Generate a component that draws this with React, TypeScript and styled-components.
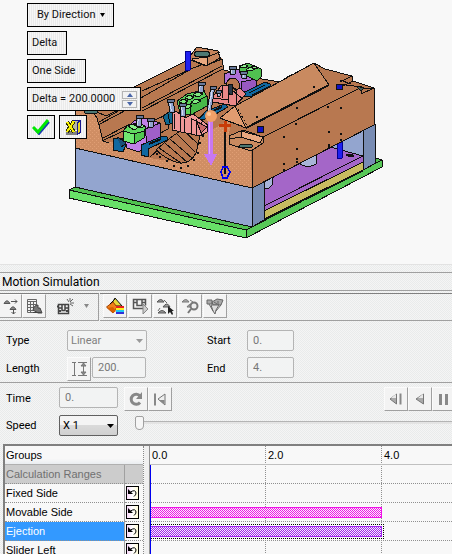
import React from "react";
import styled, { createGlobalStyle, css } from "styled-components";

const GlobalStyle = createGlobalStyle`
  * { box-sizing: border-box; }
  html, body { margin: 0; }
  body { background: #f8f8f8; color: #000; font-family: Roboto, "Open Sans", sans-serif; font-size: 11px; line-height: 16px; }
  button, input, select { font: inherit; color: inherit; margin: 0; }
  svg { display: block; flex: none; }
`;

const grain = "repeating-conic-gradient(#e9ebeb 0 25%, #f5f5f5 0 50%) 0 0 / 2px 2px";

const Page = styled.div`
  height: 100vh;
  display: flex;
  flex-direction: column;
  overflow: hidden;
`;

const Viewport = styled.section`
  position: relative;
  flex: none;
  background: #f8f8f8;
  border-bottom: 1px solid #e2e2e2;
  overflow: hidden;
`;

const FlagMenu = styled.div`
  position: absolute;
  top: 3px;
  left: 27px;
  display: flex;
  flex-direction: column;
  align-items: flex-start;
  gap: 4px;
`;

const FlagRow = styled.div`
  display: flex;
  gap: 4px;
`;

const flagBox = css`
  height: 24px;
  display: flex;
  align-items: center;
  border: 1px solid #000;
  background: repeating-linear-gradient(90deg, #f6f6f6 0 1px, #eaeaea 1px 2px);
  color: #111;
  padding: 0 4px;
  white-space: nowrap;
`;

const FlagButton = styled.button<{ $w: number; $menu?: boolean }>`
  ${flagBox}
  width: ${(p) => p.$w}px;
  ${(p) => p.$menu && "padding: 0 8px 0 9px; justify-content: space-between;"}
`;

const FlagIconButton = styled.button`
  ${flagBox}
  width: 28px;
  justify-content: center;
  padding: 0;
`;

const FlagField = styled.div`
  ${flagBox}
  width: 114px;
  gap: 3px;
  padding-right: 3px;
`;

const FlagInput = styled.input`
  flex: 1;
  min-width: 0;
  border: 0;
  padding: 0;
  background: transparent;
`;

const Spinner = styled.span`
  display: flex;
  flex-direction: column;
  gap: 1px;
`;

const SpinButton = styled.button`
  width: 15px;
  height: 8px;
  padding: 0;
  display: grid;
  place-items: center;
  border: 1px solid #b4b4b4;
  background: #f2f2f2;
`;

const Dock = styled.section`
  flex: 1;
  min-height: 0;
  display: flex;
  flex-direction: column;
  background: ${grain};
  padding-top: 7px;
`;

const DockTitle = styled.h1`
  margin: 0;
  height: 19px;
  flex: none;
  padding-left: 2px;
  border-top: 1px solid #a0a0a0;
  border-bottom: 1px solid #a0a0a0;
  font-size: 12px;
  font-weight: 400;
  line-height: 18px;
`;

const Toolbars = styled.div`
  display: flex;
  flex: none;
  gap: 1px;
  margin-top: 2px;
`;

const Toolbar = styled.div<{ $fill?: boolean }>`
  display: flex;
  gap: 1px;
  height: 28px;
  border-top: 1px solid #808080;
  border-bottom: 1px solid #a0a0a0;
  ${(p) => (p.$fill ? "flex: 1; padding-left: 3px;" : "width: 99px; border-right: 1px solid #a0a0a0;")}
`;

const ToolButton = styled.button<{ $flat?: boolean; $wide?: boolean }>`
  width: ${(p) => (p.$wide ? 52 : 24)}px;
  height: 24px;
  flex: none;
  padding: 0;
  display: flex;
  align-items: center;
  justify-content: center;
  gap: 10px;
  background: ${(p) => (p.$flat ? "transparent" : "#f3f3f3")};
  border: 1px solid ${(p) => (p.$flat ? "transparent" : "#fbfbfb")};
  border-right-color: ${(p) => (p.$flat ? "transparent" : "#a0a0a0")};
  border-bottom-color: ${(p) => (p.$flat ? "transparent" : "#a0a0a0")};
`;

const FirstToolGroup = styled.div`
  display: flex;
  margin-left: -2px;
`;

const MotionForm = styled.form`
  display: grid;
  flex: none;
  grid-template-columns: 61px 140px 40px 1fr;
  grid-template-rows: 21px 24px;
  align-items: center;
  row-gap: 6px;
  padding: 9px 6px 1px;
  border-bottom: 1px solid #a0a0a0;
`;

const PlayForm = styled.form`
  display: grid;
  flex: none;
  grid-template-columns: 53px 65px 1fr;
  grid-template-rows: 24px 21px;
  align-items: center;
  row-gap: 4px;
  padding: 4px 0 8px 6px;
`;

const Inline = styled.div`
  display: flex;
  align-items: flex-start;
  gap: 1px;
`;

const TextBox = styled.input<{ $w: number }>`
  width: ${(p) => p.$w}px;
  height: 21px;
  padding: 0 5px;
  border: 1px solid #b4b4b4;
  border-radius: 2px;
  background: #f2f3f3;
  color: #777;
  align-self: start;
`;

const SelectWrap = styled.span<{ $w: number; $off?: boolean }>`
  display: grid;
  width: ${(p) => p.$w}px;
  align-items: center;
  color: ${(p) => (p.$off ? "#808080" : "#000")};
  > * { grid-area: 1 / 1; }
  > svg { justify-self: end; margin-right: 4px; pointer-events: none; }
  > select {
    width: 100%;
    height: 21px;
    appearance: none;
    padding: 0 3px;
    opacity: 1;
    border: 1px solid ${(p) => (p.$off ? "#b4b4b4" : "#606060")};
    border-radius: 2px;
    background: ${(p) => (p.$off ? "#f2f3f3" : "linear-gradient(#f4f4f4 50%, #dadada 50%, #d0d0d0)")};
  }
`;

const Transport = styled.div`
  display: flex;
  justify-content: space-between;
  min-width: 0;
`;

const ButtonSet = styled.div<{ $bleed?: boolean }>`
  display: flex;
  ${(p) => p.$bleed && "margin-right: -4px;"}
`;

const Slider = styled.input`
  appearance: none;
  width: 100%;
  height: 16px;
  margin: 0;
  background: linear-gradient(#b4b4b4, #b4b4b4) 0 6px / 100% 1px no-repeat,
    linear-gradient(#e4e4e4, #e4e4e4) 0 7px / 100% 2px no-repeat;
  &::-webkit-slider-thumb {
    appearance: none;
    width: 9px;
    height: 14px;
    border: 1px solid #a0a0a0;
    border-radius: 2px 2px 4px 4px;
    background: #f6f6f6;
  }
`;

const SliderCell = styled.div`
  padding-left: 11px;
`;

const Schedule = styled.section`
  flex: 1;
  min-height: 0;
  overflow: hidden;
  display: flex;
  margin-left: 3px;
  border-top: 2px solid #808080;
  border-left: 2px solid #808080;
  background: #f8f8f8;
  font-family: "Liberation Sans", Arial, sans-serif;
  font-size: 11px;
  line-height: 12px;
`;

const GroupTable = styled.table`
  flex: none;
  width: 139px;
  height: max-content;
  table-layout: fixed;
  border-collapse: separate;
  border-spacing: 0;
  border-right: 1px dotted #888;
`;

const HeadCell = styled.th<{ $w?: number }>`
  height: 19px;
  ${(p) => p.$w && `width: ${p.$w}px;`}
  padding: 0 1px;
  text-align: left;
  font-weight: 400;
  border-bottom: 1px solid #b0b0b0;
  background: linear-gradient(#f8f8f8 70%, #eaedf0);
`;

const GroupRow = styled.tr<{ $kind?: "muted" | "selected" }>`
  > td {
    height: 19px;
    padding: 0 1px;
    white-space: nowrap;
    border-bottom: 1px dotted #909090;
    ${(p) => p.$kind === "muted" && "background: #cccccc; color: #707070;"}
  }
  > td:first-child {
    border-right: 1px solid #a0a0a0;
    ${(p) => p.$kind === "selected" && "background: #3399ff; color: #fff;"}
  }
`;

const ResetButton = styled.button`
  display: grid;
  place-items: center;
  width: 13px;
  height: 14px;
  padding: 0;
  border: 1px solid #000;
  background: linear-gradient(90deg, #f8d8f8, #fff 50%, #fffbd8);
`;

const Splitter = styled.div`
  width: 6px;
  flex: none;
  background: #f0f0f0;
  border-right: 1px solid #909090;
`;

const Timeline = styled.div`
  flex: 1;
  min-width: 0;
  background: repeating-linear-gradient(#909090 0 1px, transparent 1px 2px) 115px 0 / 1px 100% no-repeat,
    repeating-linear-gradient(#909090 0 1px, transparent 1px 2px) 231px 0 / 1px 100% no-repeat;
`;

const Scale = styled.div`
  display: grid;
  grid-template-columns: 116px 116px 1fr;
  height: 19px;
  align-items: center;
  border-bottom: 1px solid #c0c0c0;
  > span { padding-left: 2px; }
`;

const Tracks = styled.div`
  border-left: 1px solid #0000f0;
`;

const Track = styled.div`
  height: 19px;
  display: flex;
  align-items: center;
  border-bottom: 1px dotted #909090;
`;

const Bar = styled.div<{ $color: string }>`
  width: 231px;
  height: 11px;
  border: 1px solid ${(p) => p.$color};
  border-left: 0;
  background: repeating-conic-gradient(${(p) => p.$color} 0 25%, #f8f8f8 0 50%) 0 0 / 2px 2px;
`;

const SelectedSpan = styled.div`
  padding: 1px 1px 1px 0;
  border: 1px dotted #000;
  border-left: 0;
`;

const K = "#101010";

function Caret({ color = "#000", wide = 7 }: { color?: string; wide?: number }) {
  return (
    <svg width={wide} height="4" viewBox="0 0 7 4" preserveAspectRatio="none" aria-hidden="true">
      <path d="M0 0h7L3.5 4z" fill={color} />
    </svg>
  );
}

function SpinGlyph({ down }: { down?: boolean }) {
  return (
    <svg width="6" height="4" viewBox="0 0 6 4" aria-hidden="true">
      <path d={down ? "M0 0h6L3 4z" : "M0 4h6L3 0z"} fill="#4a66a8" />
    </svg>
  );
}

const icons: Record<string, React.ReactNode> = {
  axes: (
    <g fill="#888" stroke="#555">
      <path d="M3 6.5h6Q6 1 3 6.5zM9 12.5h6Q12 7 9 12.5z" />
      <path d="M10 4.5h6M14 2.5l2 2-2 2M12.5 13v4M10.5 15l2 2 2-2" fill="none" />
    </g>
  ),
  table: (
    <g fill="none" stroke="#666">
      <path d="M2.500 2.500h9v13h-9zM2 4.500h10M2 7.500h10M2 10.500h7M2 13.500h7M5.500 4v11M8.500 4v8" />
      <path d="M8 13q1-5 5-5v3h2l2 5h-4z" fill="#777" stroke="#444" />
      <path d="M8 15.500h8" stroke="#444" />
    </g>
  ),
  create: (
    <g fill="none" stroke="#444">
      <path d="M2.500 7.500h10v9h-10zM3 11h3V8M12 11H9V8M6 11.500v2h3v-2" strokeWidth="1.500" />
      <path d="M1 9.500h2M2 14h3M10 14h3" strokeWidth="2" />
      <path d="M14 1v3M17 2l-3 3M18 6h-4M11 2l2 3M17 9l-3-2" stroke="#666" />
    </g>
  ),
  colors: (
    <g>
      <path d="M9 1L16 9h-6L6 6z" fill="#e8d838" stroke="#111" />
      <path d="M0.500 10L7 5l4 5-4 6z" fill="#f08018" stroke="#a04000" />
      <path d="M1 11l6-1 3 4-3 2z" fill="#d86000" />
      <path d="M9 2L4 7" stroke="#111" />
      <path d="M10 9h8v2h-8z" fill="#e82020" />
      <path d="M10 11h8v2h-8z" fill="#f8f020" />
      <path d="M10 13h8v2h-8z" fill="#20c8f0" />
      <path d="M10 15h8v2h-8z" fill="#3030d8" />
    </g>
  ),
  run: (
    <g fill="none" stroke="#555">
      <path d="M12 11.500H2.500v-9h12v6M3 5.500h3v3h5v-3h3M6 3v3M11 3v3" strokeWidth="1.500" />
      <path d="M12 7l5 5-5 5z" fill="#ccc" stroke="#888" />
    </g>
  ),
  pick: (
    <g>
      <path d="M1 5h7Q5 0 1 5zM7 10h7Q11 4 7 10zM2 16h8Q6 11 2 16z" fill="#999" stroke="#555" />
      <path d="M8 3l3 3M4 11l-2 3" stroke="#666" />
      <path d="M12 9v8l2-2 2 3 1-1-1-3h2z" fill="#222" />
    </g>
  ),
  inspect: (
    <g fill="#aaa" stroke="#777">
      <path d="M1 5h7Q5 0 1 5zM6 10h6Q9 5 6 10z" />
      <path d="M9 3l3 2" />
      <circle cx="13" cy="9" r="3.500" fill="#eee" strokeWidth="2" />
      <path d="M10 12l-3 4" strokeWidth="2" />
    </g>
  ),
  camera: (
    <g fill="#aaa" stroke="#666">
      <path d="M1 3h5v4H1zM6 5l5-3 6 1-2 5H7z" />
      <path d="M5 8h8l-3 5-1 4-2-3z" fill="#ddd" />
      <path d="M3 7l4 7M12 4v4M8 5l3 2M15 8l-5 6" />
    </g>
  ),
  span: (
    <g fill="none" stroke="#777">
      <path d="M2 2.500h4M4.500 2v14M2 15.500h4M8 2.500h9M8 15.500h9M13.500 3v12" />
      <path d="M11 6l2.500-3L16 6zM11 12l2.500 3 2.500-3z" fill="#888" />
    </g>
  ),
  reload: (
    <g fill="none" stroke="#888">
      <path d="M13 12.500A5 5 0 1 1 13 6" strokeWidth="3" />
      <path d="M15 2v7H9z" fill="#888" stroke="none" />
    </g>
  ),
  first: (
    <g>
      <path d="M4 3.500v12" stroke="#888" strokeWidth="2" />
      <path d="M14 4v11L7 9z" fill="#eee" stroke="#777" />
      <path d="M13.500 10v4.500L8 10z" fill="#888" />
    </g>
  ),
  stepBack: (
    <g>
      <path d="M9.500 4v10L3 9z" fill="#aaa" stroke="#777" />
      <path d="M4 8l5-4v4z" fill="#e8e8e8" />
      <path d="M13.500 3.500v11" stroke="#888" strokeWidth="2" />
    </g>
  ),
  back: (
    <g>
      <path d="M12.500 4v10L5 9z" fill="#aaa" stroke="#777" />
      <path d="M7 8l5-4v4z" fill="#e8e8e8" />
    </g>
  ),
  pause: <path d="M4 4h3v11H4zM10 4h3v11h-3z" fill="#888" />,
};

function Icon({ name }: { name: string }) {
  return (
    <svg width="18" height="18" viewBox="0 0 18 18" aria-hidden="true">
      {icons[name]}
    </svg>
  );
}

function Tool({ icon, label }: { icon: string; label: string }) {
  return (
    <ToolButton type="button" aria-label={label}>
      <Icon name={icon} />
    </ToolButton>
  );
}

function Pin({ x, y, w, h, lean = 0 }: { x: number; y: number; w: number; h: number; lean?: number }) {
  return (
    <g stroke={K}>
      <path d={`M${x} ${y}h${w}l${lean} ${h}h${-w}z`} fill="#93a5cf" />
      <path d={`M${x + 1.5} ${y + 2}l${lean} ${h - 3}`} stroke="#d4dcf0" />
      <path d={`M${x - 1} ${y}h${w + 2}v3h${-w - 2}z`} fill="#66789a" />
    </g>
  );
}

const boreDots = [
  [297, 107], [314, 86], [328, 106], [341, 107], [296, 123], [284, 136], [341, 133], [341, 139],
  [257, 116], [329, 131], [329, 144], [329, 146], [297, 148], [297, 158], [297, 161], [284, 163], [284, 169],
  [157, 153], [160, 156], [167, 160], [174, 165], [181, 167], [188, 165], [194, 159], [198, 152], [200, 142], [203, 135],
];

function MoldDrawing() {
  return (
    <svg width="452" height="264" viewBox="0 0 452 264" shapeRendering="crispEdges" role="img" aria-label="Mold assembly">
      <defs>
        <pattern id="lit" width="4" height="4" patternUnits="userSpaceOnUse">
          <path d="M0 0h4v4H0z" fill="#d08e64" />
          <path d="M0 0h1v1H0zM2 2h1v1H2z" fill="#e09e74" />
        </pattern>
      </defs>
      <g stroke={K} strokeWidth="1" strokeLinejoin="round">
        {/* base plate */}
        <path d="M69 190L75 187 252 227 376 158 382 160 246 230z" fill="#50c050" />
        <path d="M69 190L246 230V238L69 198z" fill="#68e068" />
        <path d="M246 230L382 160V167L246 238z" fill="#58c858" />
        {/* spacer blocks */}
        <path d="M75 148L252 188V227L75 187z" fill="#93a5cf" />
        <path d="M330 147L363 128V157z" fill="#93a5cf" />
        <path d="M363 129L375 123 376 163 363 170z" fill="#788cb4" />
        {/* ejector plates */}
        <path d="M264 182L330 147 363 156V162L264 211z" fill="#a466c8" />
        <path d="M264 211L363 162V170L264 219z" fill="#c8bc60" />
        <path d="M264 206L363 156M264 220L363 171" fill="none" />
        <path d="M252 188L264 182V220L252 227z" fill="#788cb4" />
        <path d="M300 155V164Q308 169 316 164V150z" fill="#a8b4d8" />
        <path d="M264 178V188H269L272 185V175z" fill="#a8b4d8" />
        <path d="M337 142H342V158H337z" fill="#2020f0" stroke="#000090" />
        <path d="M346 155l5-1 3 2-4 1z" fill={K} />
        {/* cavity plate */}
        <path d="M75 148V108L96 108 138 85 186 61 197 47 218 51 224 70 256 78 280 82 314 63 325 69 352 76 353 81 374 88V125L252 188z" fill="#b87850" />
        <path d="M75 109L97 111 102 141 120 143 150 158 181 163 198 150 200 136 230 120 229 143 251 151 252 188 75 148z" fill="url(#lit)" stroke="none" />
        <path d="M75 109V148L252 188V151L229 143M263 137L358 89 374 88M374 88V125L252 188" fill="none" />
        {/* left ridge */}
        <path d="M96 112L138 88 186 62 222 58 224 72 148 112 125 132 103 142z" fill="#b87850" stroke="none" />
        <path d="M138 85L186 61M99 122L193 68 221 58M98 125L130 108M142 111L223 69M142 108L222 66M142 91L193 68" fill="none" />
        <path d="M92 110L97 118 99 125 103 141 109 143M102 141L140 123M103 138L128 125M97 112L106 116 130 104" fill="none" />
        <path d="M186 61L197 47 218 51 220 58 206 66 191 60z" fill="#c4845c" />
        <path d="M192 59L207 57V66L192 60z" fill="#e8a880" />
        <path d="M207 57L220 52M191 60L205 66 222 59M222 59L224 70" fill="none" />
        <ellipse cx="202" cy="54" rx="8" ry="3" fill="#4c7874" />
        <ellipse cx="91" cy="112" rx="7" ry="2" fill="#4c7874" />
        <path d="M185 51H190V70H185z" fill="#2020f0" stroke="#000090" />
        {/* right ramp */}
        <path d="M280 82L289 76 296 73 298 76 284 84z" fill={K} />
        <path d="M235 106L314 63 329 85 246 128z" fill="#c98a60" />
        <path d="M220 118L235 106 246 128z" fill="#e09c70" />
        <path d="M246 128L329 85" strokeWidth="2" />
        <path d="M222 119L245 127M238 109L247 126" strokeDasharray="2 2" />
        <path d="M340 82L352 76 353 81 341 87M338 84L362 87 361 94 374 88M340 80L351 84" fill="none" />
        <path d="M356 86L364 88 361 91z" fill="#405c58" />
        {/* front pocket */}
        <path d="M229 136L243 130 263 137V143L251 151 229 144z" fill="#c98a60" />
        <path d="M241 131L263 137 260 143 241 137z" fill="#e8a880" />
        <path d="M229 139L241 137V131M241 137L260 143" fill="none" />
        <ellipse cx="246" cy="146" rx="7" ry="2" fill="#4c7874" />
        {/* core well */}
        <path d="M156 150L170 138 190 124 205 126 200 136 196 153Q190 164 180 163 168 161 156 150z" fill="#b87850" />
        <path d="M159 148L181 163M165 143L187 162M170 139L192 158M177 134L195 152M183 130L198 144M143 151L158 141M120 142L142 149M150 157L158 150" fill="none" />
        <path d="M147 123L164 116Q170 118 168 129L155 136z" fill="#b87850" />
        {/* left slider */}
        <path d="M113 139L121 138 127 142 123 152 113 150z" fill="#1068a0" />
        <path d="M117 137L127 143 121 147" fill="#185078" />
        <path d="M123 132L134 121 145 118 160 123V138L147 143 139 152 127 148z" fill="#c080e8" />
        <path d="M145 129L160 123V138L147 143z" fill="#a060c8" />
        <path d="M141 145L163 136 167 137V140L148 149 148 157 141 155z" fill="#1068a0" />
        <path d="M149 144L161 139" strokeWidth="2" />
        <path d="M123 131L134 134V144L123 141z" fill="#70e870" />
        <path d="M134 134L144 129V138L134 144z" fill="#50c850" />
        <path d="M123 131L128 125 139 123 146 127 144 131 134 134z" fill="#60d860" />
        <path d="M128 126L132 124 139 127 134 130zM134 124L140 123 145 126 141 128z" fill="#88f088" />
        <Pin x={137} y={115} w={5} h={11} lean={-1} />
        <Pin x={148} y={118} w={5} h={9} />
        {/* rear slider */}
        <path d="M224 74L238 69 256 79V88L241 93 224 83z" fill="#b070d8" />
        <path d="M241 82L256 79V88L241 93z" fill="#9858c0" />
        <path d="M226 85Q228 76 236 79 242 84 239 90z" fill="#b87850" />
        <path d="M239 66L248 63 261 69V77L257 81 251 78 239 72z" fill="#50c050" />
        <path d="M240 67l4-3 4 2-3 2zM246 70l4-3 5 2-4 2zM251 66l4 0 3 2-4 1z" fill="#90f090" />
        <path d="M243 93L265 82 270 84V86L252 96 245 97z" fill="#1068a0" />
        <path d="M249 93L265 85M252 95L268 87" />
        <Pin x={230} y={66} w={5} h={8} />
        <Pin x={241} y={71} w={5} h={7} lean={1} />
        {/* central inserts */}
        <path d="M212 98L221 86 228 85V95L240 88 246 94 235 106 213 102z" fill="#e88888" />
        <path d="M228 95V103M234 92L242 98M222 86V98M236 91L236 104M213 98L229 100" fill="none" />
        <path d="M229 84L228 93 232 95 232 84z" fill="#283848" />
        <path d="M163 116L172 110 181 114 177 122 166 125z" fill="#106890" />
        <path d="M168 114L170 123M172 112L174 122" />
        <path d="M206 111L225 104 228 107 209 118 197 121z" fill="#1068a0" />
        <path d="M206 114L222 107" strokeWidth="2" />
        <path d="M177 101L187 94 204 90 207 98V106L191 115 180 113z" fill="#58d058" />
        <path d="M190 104L207 96V106L191 115z" fill="#48b848" />
        <path d="M179 102l4-3 5 2-4 3zM185 98l4-3 5 2-4 3zM193 95l4-3 6 2-5 3zM183 107l5-3 4 2-5 3zM191 102l5-3 5 2-6 3z" fill="#80e880" />
        <path d="M172 112L176 111 185 118 193 114 208 125 207 132 200 136 172 130z" fill="#f09898" />
        <path d="M180 116V131M184 119V132M191 118L192 134M196 119V135M201 122L202 135M174 114V129M192 119L207 127" fill="none" />
        <path d="M197 122L207 127 201 133z" fill="#c86868" />
        <Pin x={168} y={99} w={5} h={13} lean={2} />
        <Pin x={180} y={103} w={5} h={13} lean={1} />
        <Pin x={199} y={82} w={5} h={10} lean={-1} />
        <Pin x={211} y={86} w={4} h={26} lean={-4} />
        <Pin x={217} y={90} w={3} h={6} />
      </g>
      {boreDots.map(([x, y]) => (
        <path key={`${x}-${y}`} d={`M${x - 1} ${y}h2v2h-2z`} fill={K} />
      ))}
      <path d="M257 126h6v6h-6zM336 84h6v5h-6z" fill="#1010c0" stroke={K} />
      {/* ejection direction and origin handles */}
      <path d="M208 120h5v34h4l-6 12-7-12h4z" fill="#c878f0" />
      <path d="M209 122v32" stroke="#e0a8ff" />
      <circle cx="211" cy="116" r="6" fill="#f0a068" shapeRendering="auto" />
      <circle cx="209" cy="114" r="2" fill="#ffc898" shapeRendering="auto" />
      <path d="M225 128v44" stroke={K} strokeWidth="2" />
      <path d="M219 125h12M225 121v11" stroke="#c83c08" strokeWidth="3" />
      <path d="M223 167h4l3 5-3 6h-4l-2-6z" fill="none" stroke="#0000f0" strokeWidth="1.500" />
      <path d="M225 168v6" stroke={K} strokeWidth="2" />
    </svg>
  );
}

const groups: { name: string; reset: boolean; kind?: "muted" | "selected"; color?: string }[] = [
  { name: "Calculation Ranges", reset: false, kind: "muted" },
  { name: "Fixed Side", reset: true },
  { name: "Movable Side", reset: true, color: "#f010e8" },
  { name: "Ejection", reset: true, kind: "selected", color: "#a020f0" },
  { name: "Slider Left", reset: true },
];

export default function App() {
  return (
    <Page>
      <GlobalStyle />
      <Viewport>
        <MoldDrawing />
        <FlagMenu>
          <FlagButton type="button" $w={87} $menu>
            By Direction <Caret wide={5} />
          </FlagButton>
          <FlagButton type="button" $w={40}>Delta</FlagButton>
          <FlagButton type="button" $w={59}>One Side</FlagButton>
          <FlagField>
            <label htmlFor="delta">Delta =</label>
            <FlagInput id="delta" defaultValue="200.0000" />
            <Spinner>
              <SpinButton type="button" aria-label="Increase"><SpinGlyph /></SpinButton>
              <SpinButton type="button" aria-label="Decrease"><SpinGlyph down /></SpinButton>
            </Spinner>
          </FlagField>
          <FlagRow>
            <FlagIconButton type="button" aria-label="Accept">
              <svg width="18" height="16" viewBox="0 0 18 16" aria-hidden="true">
                <path d="M2 9l5 6L17 3" fill="none" stroke="#1a3ab0" strokeWidth="2" />
                <path d="M1 8l5 5L16 1" fill="none" stroke="#00e800" strokeWidth="3" />
              </svg>
            </FlagIconButton>
            <FlagIconButton type="button" aria-label="Exit">
              <svg width="18" height="18" viewBox="0 0 18 18" shapeRendering="crispEdges" aria-hidden="true">
                <path d="M2 13h12v4H2z" fill="#808080" />
                <path d="M8 2h9v13l-4 2V6H8z" fill="#181890" />
                <path d="M9 3h5l-1 2v7H9z" fill="#b8b8a0" />
                <path d="M14 5l2-2v10l-2 2z" fill="#e8d820" />
                <path d="M3 4l7 10M10 3L3 14" stroke="#303000" strokeWidth="4" />
                <path d="M3 4l7 10M10 3L3 14" stroke="#f8f000" strokeWidth="2" />
              </svg>
            </FlagIconButton>
          </FlagRow>
        </FlagMenu>
      </Viewport>

      <Dock>
        <DockTitle>Motion Simulation</DockTitle>
        <Toolbars>
          <Toolbar>
            <FirstToolGroup>
              <Tool icon="axes" label="Directions" />
              <Tool icon="table" label="Motion table" />
              <ToolButton type="button" $flat $wide aria-label="Create motion">
                <Icon name="create" />
                <Caret color="#888" wide={5} />
              </ToolButton>
            </FirstToolGroup>
          </Toolbar>
          <Toolbar $fill>
            <Tool icon="colors" label="Colors" />
            <Tool icon="run" label="Run" />
            <Tool icon="pick" label="Pick" />
            <Tool icon="inspect" label="Inspect" />
            <Tool icon="camera" label="Record" />
          </Toolbar>
        </Toolbars>

        <MotionForm>
          <label htmlFor="type">Type</label>
          <SelectWrap $w={80} $off>
            <select id="type" disabled><option>Linear</option></select>
            <Caret color="#999" />
          </SelectWrap>
          <label htmlFor="start">Start</label>
          <TextBox id="start" $w={47} defaultValue="0." disabled />
          <label htmlFor="length">Length</label>
          <Inline>
            <Tool icon="span" label="Measure length" />
            <TextBox id="length" $w={54} defaultValue="200." disabled />
          </Inline>
          <label htmlFor="end">End</label>
          <TextBox id="end" $w={47} defaultValue="4." disabled />
        </MotionForm>

        <PlayForm>
          <label htmlFor="time">Time</label>
          <TextBox id="time" $w={59} defaultValue="0." disabled />
          <Transport>
            <ButtonSet>
              <Tool icon="reload" label="Restart" />
              <Tool icon="first" label="First frame" />
            </ButtonSet>
            <ButtonSet $bleed>
              <Tool icon="stepBack" label="Step back" />
              <Tool icon="back" label="Play backward" />
              <Tool icon="pause" label="Pause" />
            </ButtonSet>
          </Transport>
          <label htmlFor="speed">Speed</label>
          <SelectWrap $w={59}>
            <select id="speed"><option>X 1</option></select>
            <Caret />
          </SelectWrap>
          <SliderCell>
            <Slider type="range" min="0" max="100" defaultValue="0" aria-label="Time position" />
          </SliderCell>
        </PlayForm>

        <Schedule>
          <GroupTable>
            <thead>
              <tr>
                <HeadCell>Groups</HeadCell>
                <HeadCell $w={18} aria-label="Reset" />
              </tr>
            </thead>
            <tbody>
              {groups.map((g) => (
                <GroupRow key={g.name} $kind={g.kind}>
                  <td>{g.name}</td>
                  <td>
                    {g.reset && (
                      <ResetButton type="button" aria-label={`Reset ${g.name}`}>
                        <svg width="9" height="8" viewBox="0 0 9 8" aria-hidden="true">
                          <path d="M0 0v5h5z" fill="#000" />
                          <path d="M2.500 3Q7.500 0 8 4 8 6 6 7.500" fill="none" stroke="#000" />
                        </svg>
                      </ResetButton>
                    )}
                  </td>
                </GroupRow>
              ))}
            </tbody>
          </GroupTable>
          <Splitter />
          <Timeline>
            <Scale>
              <span>0.0</span>
              <span>2.0</span>
              <span>4.0</span>
            </Scale>
            <Tracks>
              {groups.map((g) => (
                <Track key={g.name}>
                  {g.color &&
                    (g.kind === "selected" ? (
                      <SelectedSpan><Bar $color={g.color} /></SelectedSpan>
                    ) : (
                      <Bar $color={g.color} />
                    ))}
                </Track>
              ))}
            </Tracks>
          </Timeline>
        </Schedule>
      </Dock>
    </Page>
  );
}
